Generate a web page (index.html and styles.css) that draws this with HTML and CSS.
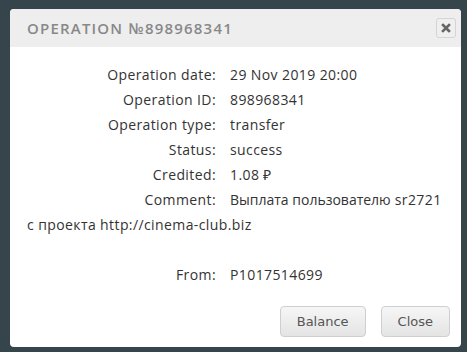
FILE: index.html
```html
<!DOCTYPE html>
<html lang="ru">
<head>
    <meta charset="UTF-8">
    <title>Operation</title>
    <link rel="stylesheet" href="styles.css">
</head>
<body>
    <div class="modal">
        <div class="modal-header">
            <h3>Operation №898968341</h3>
            <button class="close-x" title="Close">
                <svg width="10" height="10" viewBox="0 0 10 10"><path d="M2 2 L8 8 M8 2 L2 8" stroke="#666" stroke-width="2.6" stroke-linecap="square"/></svg>
            </button>
        </div>
        <div class="modal-body">
            <span class="lbl">Operation date:</span><span class="val">29 Nov 2019 20:00</span><br>
            <span class="lbl">Operation ID:</span><span class="val">898968341</span><br>
            <span class="lbl">Operation type:</span><span class="val">transfer</span><br>
            <span class="lbl">Status:</span><span class="val">success</span><br>
            <span class="lbl">Credited:</span><span class="val">1.08 ₽</span><br>
            <span class="lbl">Comment:</span><span class="val"><span class="cyr">Выплата пользователю</span> sr2721 с проекта http://cinema-club.biz</span><br>
            <br>
            <span class="lbl">From:</span><span class="val">P1017514699</span>
        </div>
        <div class="modal-footer">
            <button class="btn">Balance</button>
            <button class="btn">Close</button>
        </div>
    </div>
</body>
</html>
```

FILE: styles.css
```css
body { margin: 0; background: #36444c; font-family: "Open Sans", sans-serif; }
.modal { margin: 9px 6px 0 10px; width: 451px; height: 338px; background: #fff; border-radius: 4px; overflow: hidden; display: flex; flex-direction: column; }
.modal-header { background: #eeeeee; height: 38px; display: flex; align-items: center; justify-content: space-between; padding: 0 5px 0 17px; }
.modal-header h3 { margin: 0; font-size: 15px; font-weight: 600; letter-spacing: 1.2px; color: #888; text-transform: uppercase; }
.close-x { width: 20px; height: 20px; padding: 0; border: 1px solid #d4d4d4; border-radius: 3px; background: #efefef; display: flex; align-items: center; justify-content: center; }
.modal-body { padding: 15px 17px 0; font-size: 14px; line-height: 25px; color: #333; letter-spacing: 0.4px; flex: 1; }
.lbl { display: inline-block; width: 189px; text-align: right; margin-right: 14px; }
.cyr { letter-spacing: 0; }
.modal-footer { display: flex; justify-content: flex-end; gap: 15px; padding: 0 11px 10px 0; }
.btn { height: 31px; padding: 0 16px; font-family: "DejaVu Sans", Verdana, sans-serif; font-size: 13px; color: #555; background: linear-gradient(#f6f6f6, #e4e4e4); border: 1px solid #cfcfcf; border-radius: 4px; }
```
